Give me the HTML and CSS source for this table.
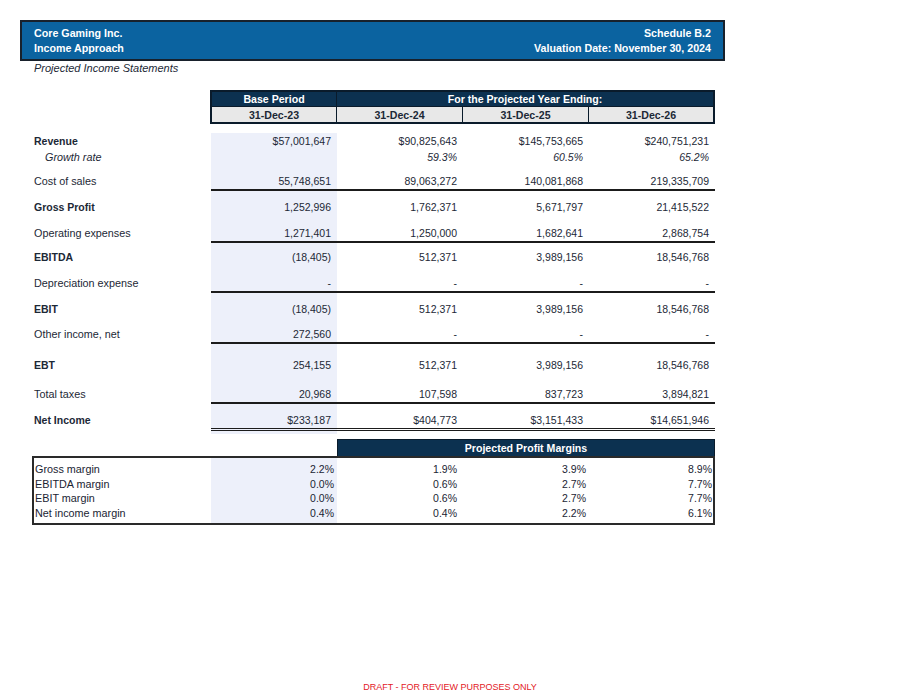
FILE: index.html
```html
<!DOCTYPE html>
<html lang="en">
<head>
<meta charset="utf-8">
<title>Core Gaming Inc. - Income Approach</title>
<link rel="stylesheet" href="styles.css">
</head>
<body>
<div class="page">
  <header class="banner">
    <div class="banner-col">
      <div>Core Gaming Inc.</div>
      <div>Income Approach</div>
    </div>
    <div class="banner-col right">
      <div>Schedule B.2</div>
      <div>Valuation Date: November 30, 2024</div>
    </div>
  </header>
  <div class="subtitle">Projected Income Statements</div>

  <section class="statement">
    <div class="head">
      <div class="hcell dark">Base Period</div>
      <div class="hcell dark span3">For the Projected Year Ending:</div>
      <div class="hcell light">31-Dec-23</div>
      <div class="hcell light">31-Dec-24</div>
      <div class="hcell light">31-Dec-25</div>
      <div class="hcell light">31-Dec-26</div>
    </div>

    <div class="body">
      <div class="row first bold">
        <div class="label">Revenue</div>
        <div class="num">$57,001,647</div><div class="num">$90,825,643</div><div class="num">$145,753,665</div><div class="num">$240,751,231</div>
      </div>
      <div class="row flush italic">
        <div class="label indent">Growth rate</div>
        <div class="num"></div><div class="num">59.3%</div><div class="num">60.5%</div><div class="num">65.2%</div>
      </div>
      <div class="row sp8 rule">
        <div class="label">Cost of sales</div>
        <div class="num">55,748,651</div><div class="num">89,063,272</div><div class="num">140,081,868</div><div class="num">219,335,709</div>
      </div>
      <div class="row sp8 bold">
        <div class="label">Gross Profit</div>
        <div class="num">1,252,996</div><div class="num">1,762,371</div><div class="num">5,671,797</div><div class="num">21,415,522</div>
      </div>
      <div class="row sp10 rule">
        <div class="label">Operating expenses</div>
        <div class="num">1,271,401</div><div class="num">1,250,000</div><div class="num">1,682,641</div><div class="num">2,868,754</div>
      </div>
      <div class="row sp6 bold">
        <div class="label">EBITDA</div>
        <div class="num">(18,405)</div><div class="num">512,371</div><div class="num">3,989,156</div><div class="num">18,546,768</div>
      </div>
      <div class="row sp10 rule">
        <div class="label">Depreciation expense</div>
        <div class="num">-</div><div class="num">-</div><div class="num">-</div><div class="num">-</div>
      </div>
      <div class="row sp8 bold">
        <div class="label">EBIT</div>
        <div class="num">(18,405)</div><div class="num">512,371</div><div class="num">3,989,156</div><div class="num">18,546,768</div>
      </div>
      <div class="row sp9 rule">
        <div class="label">Other income, net</div>
        <div class="num">272,560</div><div class="num">-</div><div class="num">-</div><div class="num">-</div>
      </div>
      <div class="row sp13 bold">
        <div class="label">EBT</div>
        <div class="num">254,155</div><div class="num">512,371</div><div class="num">3,989,156</div><div class="num">18,546,768</div>
      </div>
      <div class="row sp13 rule">
        <div class="label">Total taxes</div>
        <div class="num">20,968</div><div class="num">107,598</div><div class="num">837,723</div><div class="num">3,894,821</div>
      </div>
      <div class="row sp8 bold total">
        <div class="label">Net Income</div>
        <div class="num">$233,187</div><div class="num">$404,773</div><div class="num">$3,151,433</div><div class="num">$14,651,946</div>
      </div>
    </div>
  </section>

  <section class="margins">
    <div class="margins-head">Projected Profit Margins</div>
    <div class="margins-box">
      <div class="mrow">
        <div class="label">Gross margin</div>
        <div class="num">2.2%</div><div class="num">1.9%</div><div class="num">3.9%</div><div class="num">8.9%</div>
      </div>
      <div class="mrow">
        <div class="label">EBITDA margin</div>
        <div class="num">0.0%</div><div class="num">0.6%</div><div class="num">2.7%</div><div class="num">7.7%</div>
      </div>
      <div class="mrow">
        <div class="label">EBIT margin</div>
        <div class="num">0.0%</div><div class="num">0.6%</div><div class="num">2.7%</div><div class="num">7.7%</div>
      </div>
      <div class="mrow">
        <div class="label">Net income margin</div>
        <div class="num">0.4%</div><div class="num">0.4%</div><div class="num">2.2%</div><div class="num">6.1%</div>
      </div>
    </div>
  </section>

  <footer class="draft">DRAFT - FOR REVIEW PURPOSES ONLY</footer>
</div>
</body>
</html>
```

FILE: styles.css
```css
* { box-sizing: border-box; }

html, body {
  margin: 0;
  padding: 0;
  background: #ffffff;
}

body {
  width: 900px;
  height: 695px;
  overflow: hidden;
  font-family: "Liberation Sans", Arial, sans-serif;
  color: #1c2836;
}

.page {
  padding-top: 20px;
}

/* Banner */
.banner {
  margin-left: 20px;
  width: 705px;
  height: 41px;
  background: #0b63a0;
  border: 2px solid #18212c;
  color: #ffffff;
  font-weight: bold;
  font-size: 10.7px;
  line-height: 15px;
  display: flex;
  justify-content: space-between;
  padding: 4px 12px 0 12px;
}

.banner-col.right {
  text-align: right;
}

.subtitle {
  margin-left: 34px;
  height: 14px;
  line-height: 14px;
  font-size: 11px;
  font-style: italic;
  color: #1c2836;
}

/* Statement */
.statement {
  margin-top: 15px;
  margin-left: 32px;
  width: 683px;
}

.head {
  margin-left: 178px;
  width: 505px;
  display: grid;
  grid-template-columns: 124px 125px 125px 124px;
  grid-template-rows: 14px 15px;
  gap: 1px;
  background: #0a1b2b;
  border: 2px solid #0a1b2b;
  font-size: 10.6px;
  font-weight: bold;
  text-align: center;
}

.hcell {
  display: flex;
  align-items: center;
  justify-content: center;
}

.hcell.dark {
  background: #0c3150;
  color: #ffffff;
}

.hcell.light {
  background: #e8e8e8;
  color: #1c2836;
}

.span3 {
  grid-column: span 3;
}

.body {
  padding-bottom: 3px;
  background: linear-gradient(90deg, transparent 179px, #edf0fa 179px, #edf0fa 305px, transparent 305px);
}

.row {
  display: grid;
  grid-template-columns: 179px 126px 127px 126px 125px;
  font-size: 10.5px;
  line-height: 16px;
}

.row.first { margin-top: 9px; }
.row.flush { margin-top: 0; }
.row.sp6 { margin-top: 6px; }
.row.sp8 { margin-top: 8px; }
.row.sp9 { margin-top: 9px; }
.row.sp10 { margin-top: 10px; }
.row.sp13 { margin-top: 13px; }

.row .label {
  padding-left: 2px;
  white-space: nowrap;
  font-size: 10.8px;
}

.row.bold .label {
  font-weight: bold;
  font-size: 10.5px;
}

.row.italic {
  font-style: italic;
}

.label.indent {
  padding-left: 13px;
}

.num {
  text-align: right;
  padding-right: 6px;
  white-space: nowrap;
}

.row .num:nth-child(3),
.row .num:nth-child(4) {
  padding-right: 7px;
}

.row.rule .num {
  border-bottom: 2px solid #1b1b1b;
}

.row.total .num {
  border-bottom: 3px double #1b1b1b;
}

/* Margins */
.margins {
  margin-top: 5px;
  margin-left: 32px;
  width: 683px;
}

.margins-head {
  margin-left: 305px;
  width: 378px;
  height: 17px;
  line-height: 17px;
  background: #0c3150;
  border: 1px solid #0a1b2b;
  border-bottom: none;
  color: #ffffff;
  font-weight: bold;
  font-size: 10.6px;
  text-align: center;
}

.margins-box {
  border: 2px solid #2a2a2a;
  padding: 4px 0 3px 0;
  background: linear-gradient(90deg, transparent 177px, #edf0fa 177px, #edf0fa 303px, transparent 303px);
}

.mrow {
  display: grid;
  grid-template-columns: 177px 126px 127px 126px 123px;
  font-size: 10.5px;
  line-height: 14.5px;
  color: #1a2433;
}

.mrow .label {
  padding-left: 1px;
  font-size: 10.8px;
}

.mrow .num:nth-child(2) { padding-right: 3px; }
.mrow .num:nth-child(3) { padding-right: 7px; }
.mrow .num:nth-child(4) { padding-right: 4px; }
.mrow .num:nth-child(5) { padding-right: 1px; }

.draft {
  margin-top: 157px;
  text-align: center;
  font-size: 9px;
  line-height: 11px;
  color: #e3201f;
}
```
